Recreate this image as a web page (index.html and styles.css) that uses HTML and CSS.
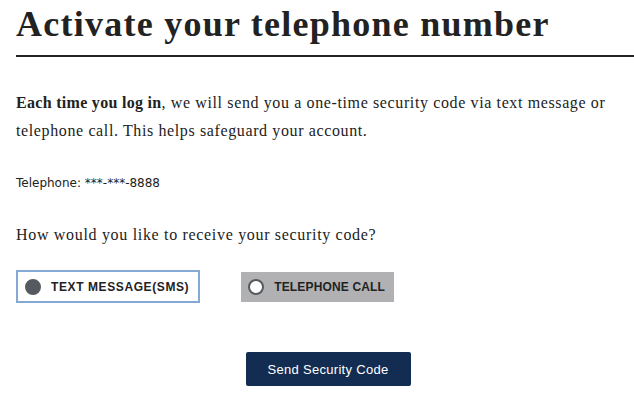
FILE: index.html
```html
<!DOCTYPE html>
<html>
<head>
<meta charset="utf-8">
<link rel="stylesheet" href="styles.css">
</head>
<body>
<div class="page">
  <h1 class="title">Activate your telephone number</h1>
  <p class="intro"><strong>Each time you log in</strong>, we will send you a one-time security code via text message or telephone call. This helps safeguard your account.</p>
  <p class="phone">Telephone: ***-***-8888</p>
  <p class="question">How would you like to receive your security code?</p>
  <div class="options">
    <label class="option selected"><span class="radio"></span><span class="opt-label">TEXT MESSAGE(SMS)</span></label>
    <label class="option"><span class="radio"></span><span class="opt-label">TELEPHONE CALL</span></label>
  </div>
  <div class="actions">
    <button class="send">Send Security Code</button>
  </div>
</div>
</body>
</html>
```
FILE: styles.css
```css
html, body {
  margin: 0;
  padding: 0;
  background: #fff;
}
.page {
  padding: 0 0 0 16px;
  color: #222;
}
.title {
  margin: 0;
  padding: 4px 0 11px;
  font-family: "Liberation Serif", serif;
  font-weight: bold;
  font-size: 36px;
  line-height: 40px;
  letter-spacing: 1.25px;
  color: #222;
  border-bottom: 2px solid #222;
}
.intro {
  margin: 32px 0 0;
  font-family: "Liberation Serif", serif;
  font-size: 16px;
  line-height: 28px;
  letter-spacing: 0.62px;
  color: #222;
}
.intro strong {
  font-weight: bold;
  letter-spacing: 0.3px;
}
.phone {
  margin: 30px 0 0;
  font-family: "DejaVu Sans", sans-serif;
  font-size: 12px;
  line-height: 16px;
  color: #222;
}
.question {
  margin: 32px 0 0;
  font-family: "Liberation Serif", serif;
  font-size: 16px;
  line-height: 24px;
  letter-spacing: 0.68px;
  color: #222;
}
.options {
  display: flex;
  align-items: center;
  gap: 41px;
  margin-top: 23px;
}
.option {
  display: flex;
  align-items: center;
  gap: 10px;
  box-sizing: border-box;
  height: 30px;
  padding: 0 9px 0 7px;
  background: #b1b1b4;
  font-family: "Liberation Sans", sans-serif;
  font-weight: bold;
  font-size: 12px;
  letter-spacing: 0.15px;
  color: #222;
}
.option.selected {
  height: 33px;
  background: #fff;
  border: 2px solid #86a9d3;
  padding: 0 9px 0 7px;
  letter-spacing: 0.6px;
}
.radio {
  box-sizing: border-box;
  width: 16px;
  height: 16px;
  border-radius: 50%;
  border: 2px solid #555a60;
  background: #fff;
}
.option.selected .radio {
  background: #555a60;
  border-color: #555a60;
}
.actions {
  display: flex;
  justify-content: center;
  margin-top: 49px;
}
.send {
  width: 165px;
  height: 34px;
  margin-left: 6px;
  border: none;
  border-radius: 2px;
  background: #132d52;
  color: #fff;
  font-family: "Liberation Sans", sans-serif;
  font-size: 13px;
  letter-spacing: 0.3px;
}
```
